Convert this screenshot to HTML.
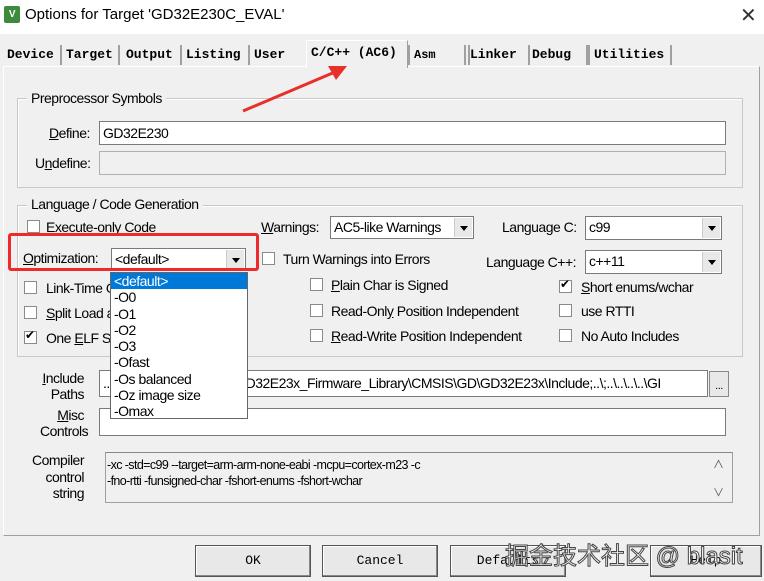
<!DOCTYPE html>
<html><head><meta charset="utf-8"><style>
body{margin:0;width:764px;height:581px;background:#f0f0f0;position:relative;overflow:hidden;font-family:"Liberation Sans","Noto Sans CJK SC",sans-serif;font-size:14px;color:#000;letter-spacing:-0.5px}
.a{position:absolute;white-space:nowrap}
.tab{position:absolute;top:45px;height:20px;font-family:"Liberation Mono",monospace;font-weight:bold;font-size:13px;line-height:20px;border-right:2px solid #a0a0a0;padding-left:4px;letter-spacing:0}
.grp{position:absolute;border:1px solid #c8c8c8;box-shadow:inset 1px 1px 0 #fff}
.lab{position:absolute;background:#f0f0f0;padding:0 4px;font-size:14px}
.in{position:absolute;background:#fff;border:1px solid #7a7a7a;box-sizing:border-box;padding-left:3px;line-height:22px}
.cb{position:absolute;width:13px;height:13px;border:1px solid #8a8a8a;background:#fff;box-sizing:border-box}
.cb.c::after{content:"✔";position:absolute;left:0;top:-4px;font-size:12px}
.cmb{position:absolute;background:#fff;border:1px solid #7a7a7a;box-sizing:border-box;padding-left:3px;line-height:20px}
.cmb i{position:absolute;right:1px;top:1px;bottom:1px;width:17px;background:#e8e8e8;border-left:1px solid #ccc}
.cmb i::after{content:"";position:absolute;left:5px;top:8px;border:4px solid transparent;border-top:5px solid #000}
.btn{position:absolute;top:545px;height:32px;border:1px solid #555;box-shadow:inset -1px -1px 0 #888,inset 1px 1px 0 #fff;background:#e8e8e8;font-family:"Liberation Mono",monospace;font-size:13px;text-align:center;line-height:30px;box-sizing:border-box;letter-spacing:0}
.dd div{height:16.3px;line-height:16px;padding-left:3px}
u{text-decoration:underline}
</style></head><body>
<div class="a" style="left:0;top:0;width:764px;height:34px;background:#fff"></div>
<div class="a" style="left:4px;top:6px;width:16px;height:17px;background:#3c8a3c;border-radius:2px;color:#fff;font-size:10px;font-weight:bold;text-align:center;line-height:17px">V</div>
<div class="a" style="left:25px;top:6px;font-size:15px;letter-spacing:0">Options for Target 'GD32E230C_EVAL'</div>
<div class="a" style="left:740px;top:3px;font-size:20px;font-weight:300;color:#333">✕</div>

<div class="a" style="left:3px;top:66px;width:757px;height:470px;border:1px solid #a0a0a0;border-top-color:#fff;border-left-color:#fff;box-sizing:border-box"></div>
<div class="tab" style="left:3px;width:53px">Device</div>
<div class="tab" style="left:62px;width:52px">Target</div>
<div class="tab" style="left:122px;width:54px">Output</div>
<div class="tab" style="left:182px;width:62px">Listing</div>
<div class="tab" style="left:250px;width:50px;border:none">User</div>
<div class="tab" style="left:306px;top:40px;height:27px;width:96px;background:#f0f0f0;border-right:1px solid #a0a0a0;border-left:1px solid #fff;border-top:1px solid #fff;line-height:24px">C/C++ (AC6)</div>
<div class="tab" style="left:408px;width:54px;border-left:2px solid #a0a0a0;font-size:12px">Asm</div>
<div class="tab" style="left:464px;width:58px;border-left:2px solid #a0a0a0">Linker</div>
<div class="tab" style="left:528px;width:54px">Debug</div>
<div class="tab" style="left:588px;width:76px;border-left:2px solid #a0a0a0">Utilities</div>

<div class="grp" style="left:17px;top:98px;width:724px;height:88px"></div>
<div class="lab" style="left:27px;top:90px">Preprocessor Symbols</div>
<div class="a" style="left:49px;top:125px"><u>D</u>efine:</div>
<div class="in" style="left:99px;top:121px;width:627px;height:24px">GD32E230</div>
<div class="a" style="left:35px;top:155px">U<u>n</u>define:</div>
<div class="in" style="left:99px;top:151px;width:627px;height:24px;background:#f0f0f0;border-color:#b0b0b0"></div>

<div class="grp" style="left:17px;top:205px;width:724px;height:150px"></div>
<div class="lab" style="left:27px;top:196px">Language / Code Generation</div>
<div class="cb" style="left:27px;top:220px"></div><div class="a" style="left:46px;top:219px">Execute-only Code</div>
<div class="a" style="left:261px;top:219px"><u>W</u>arnings:</div>
<div class="cmb" style="left:330px;top:216px;width:144px;height:23px">AC5-like Warnings<i></i></div>
<div class="a" style="left:502px;top:219px">Language C:</div>
<div class="cmb" style="left:585px;top:216px;width:137px;height:24px">c99<i></i></div>
<div class="a" style="left:23px;top:250px"><u>O</u>ptimization:</div>
<div class="cmb" style="left:111px;top:248px;width:135px;height:22px">&lt;default&gt;<i></i></div>
<div class="cb" style="left:262px;top:252px"></div><div class="a" style="left:283px;top:251px">Turn Warnings into Errors</div>
<div class="a" style="left:486px;top:254px">Language C++:</div>
<div class="cmb" style="left:585px;top:250px;width:137px;height:24px">c++11<i></i></div>
<div class="cb" style="left:24px;top:281px"></div><div class="a" style="left:46px;top:280px">Link-Time O</div>
<div class="cb" style="left:24px;top:306px"></div><div class="a" style="left:46px;top:305px"><u>S</u>plit Load a</div>
<div class="cb c" style="left:24px;top:331px"></div><div class="a" style="left:46px;top:330px">One <u>E</u>LF S</div>
<div class="cb" style="left:310px;top:278px"></div><div class="a" style="left:331px;top:277px"><u>P</u>lain Char is Signed</div>
<div class="cb" style="left:310px;top:304px"></div><div class="a" style="left:331px;top:303px">Read-Onl<u>y</u> Position Independent</div>
<div class="cb" style="left:310px;top:329px"></div><div class="a" style="left:331px;top:328px"><u>R</u>ead-Write Position Independent</div>
<div class="cb c" style="left:559px;top:280px"></div><div class="a" style="left:581px;top:279px"><u>S</u>hort enums/wchar</div>
<div class="cb" style="left:559px;top:304px"></div><div class="a" style="left:581px;top:303px">use RTTI</div>
<div class="cb" style="left:559px;top:329px"></div><div class="a" style="left:581px;top:328px">No Auto Includes</div>

<div class="a" style="left:40px;top:370px;text-align:right;width:44px;line-height:16px"><u>I</u>nclude<br>Paths</div>
<div class="in" style="left:99px;top:370px;width:609px;height:27px;line-height:25px;overflow:hidden">..&nbsp;&nbsp;&nbsp;&nbsp;&nbsp;&nbsp;&nbsp;&nbsp;&nbsp;&nbsp;&nbsp;&nbsp;&nbsp;&nbsp;&nbsp;&nbsp;&nbsp;&nbsp;&nbsp;&nbsp;&nbsp;&nbsp;&nbsp;&nbsp;&nbsp;&nbsp;&nbsp;&nbsp;&nbsp;&nbsp;&nbsp;&nbsp;&nbsp;&nbsp;&nbsp;&nbsp;&nbsp;GD32E23x_Firmware_Library\CMSIS\GD\GD32E23x\Include;..\;..\..\..\..\GI</div>
<div class="a" style="left:709px;top:371px;width:20px;height:26px;border:1px solid #888;background:#e8e8e8;box-sizing:border-box;text-align:center;font-size:11px;line-height:28px">...</div>
<div class="a" style="left:40px;top:407px;text-align:right;width:44px;line-height:16px"><u>M</u>isc<br>Controls</div>
<div class="in" style="left:99px;top:408px;width:627px;height:28px"></div>
<div class="a" style="left:20px;top:452px;text-align:right;width:64px;line-height:16.5px">Compiler<br>control<br>string</div>
<div class="a" style="left:105px;top:452px;width:628px;height:51px;border:1px solid #a0a0a0;border-top-color:#888;box-sizing:border-box;font-size:12.5px;line-height:16px;padding:4px 0 0 1px;letter-spacing:-0.6px">-xc -std=c99 --target=arm-arm-none-eabi -mcpu=cortex-m23 -c<br>-fno-rtti -funsigned-char -fshort-enums -fshort-wchar</div>
<div class="a" style="left:713px;top:456px;font-size:11px;color:#555">&#8743;</div>
<div class="a" style="left:713px;top:484px;font-size:11px;color:#555">&#8744;</div>

<div class="btn" style="left:195px;width:116px">OK</div>
<div class="btn" style="left:322px;width:116px">Cancel</div>
<div class="btn" style="left:450px;width:116px">Defaults</div>
<div class="btn" style="left:650px;width:112px">Help</div>

<div class="a dd" style="left:110px;top:272px;width:138px;height:147px;background:#fff;border:1px solid #666;box-sizing:border-box;font-size:14px">
<div style="background:#0078d7;color:#fff">&lt;default&gt;</div><div>-O0</div><div>-O1</div><div>-O2</div><div>-O3</div><div>-Ofast</div><div>-Os balanced</div><div>-Oz image size</div><div>-Omax</div></div>

<div class="a" style="left:8px;top:233px;width:251px;height:38px;border:3.5px solid #ee2b2b;border-radius:3px;box-sizing:border-box"></div>
<svg class="a" style="left:0;top:0" width="764" height="581"><line x1="243" y1="111" x2="335" y2="72" stroke="#e8302a" stroke-width="3"/><polygon points="347,66 328,66 336,80" fill="#e8302a"/></svg>

<div class="a" style="left:505px;top:536px;font-size:24px;color:#fff;letter-spacing:0;-webkit-text-stroke:1px #444;font-family:'Liberation Sans','Noto Sans CJK SC',sans-serif">掘金技术社区 @ blasit</div>
</body></html>
